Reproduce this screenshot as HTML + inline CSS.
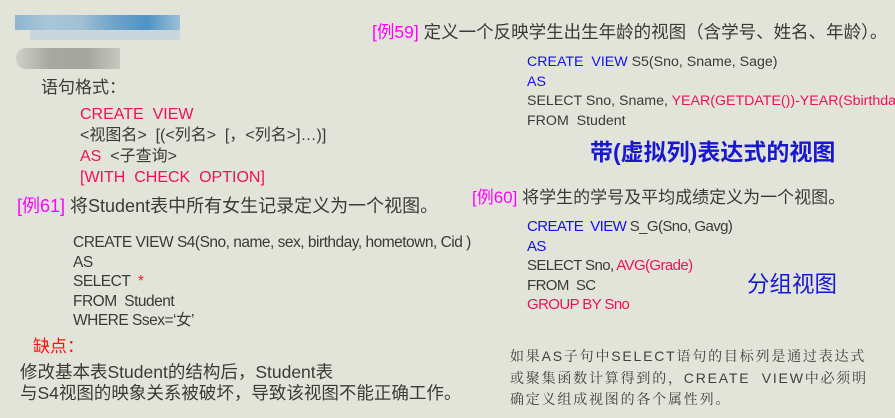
<!DOCTYPE html>
<html><head><meta charset="utf-8"><style>
body{margin:0;width:895px;height:418px;background:#e3e4d9;position:relative;overflow:hidden;font-family:"Liberation Sans","Noto Sans CJK SC",sans-serif;color:#3a3a3a}
.a{position:absolute;white-space:nowrap;line-height:1}
.m{color:#ff00ff}.r{color:#f0105a}.b{color:#1010f0}
.c{font-size:14px;letter-spacing:-0.4px}
</style></head><body>
<div class="a" style="left:15px;top:15px;width:165px;height:15px;background:linear-gradient(90deg,#8fb5d2,#a9c6d8,#9fc0d5,#6fa3c9,#4f93c5,#9cc0d6)"></div>
<div class="a" style="left:30px;top:30px;width:150px;height:10px;background:#c9d7dc"></div>
<div class="a" style="left:16px;top:48px;width:104px;height:21px;border-radius:10px 0 0 10px;background:linear-gradient(90deg,#cfd0c8,#a6a8a0,#a4a69e,#c6c8c0)"></div>

<div class="a" style="left:41px;top:79px;font-size:17px">语句格式：</div>
<div class="a" style="left:80px;top:104px;font-size:16px;line-height:21px">
<span class="r">CREATE&nbsp; VIEW</span><br>&lt;视图名&gt;&nbsp; [(&lt;列名&gt;&nbsp; [，&lt;列名&gt;]…)]<br><span class="r">AS</span>&nbsp; &lt;子查询&gt;<br><span class="r">[WITH&nbsp; CHECK&nbsp; OPTION]</span></div>
<div class="a" style="left:17px;top:197px;font-size:18px"><span class="m">[例61]</span> 将Student表中所有女生记录定义为一个视图。</div>
<div class="a c" style="left:73px;top:233px;line-height:19.6px;font-size:15.5px;letter-spacing:-0.5px">CREATE VIEW S4(Sno, name, sex, birthday, hometown, Cid )<br>AS<br>SELECT&nbsp; <span style="color:#f02020">*</span><br>FROM&nbsp; Student<br>WHERE Ssex=‘女’</div>
<div class="a" style="left:33px;top:338px;font-size:17px;color:#ff1010">缺点：</div>
<div class="a" style="left:20px;top:362px;font-size:17.5px;line-height:21px">修改基本表Student的结构后，Student表<br>与S4视图的映象关系被破坏，导致该视图不能正确工作。</div>

<div class="a" style="left:372px;top:24px;font-size:17.5px"><span class="m">[例59]</span> 定义一个反映学生出生年龄的视图（含学号、姓名、年龄）。</div>
<div class="a" style="left:527px;top:53px;font-size:14.2px;line-height:19.6px"><span class="b">CREATE&nbsp; VIEW</span> S5(Sno, Sname, Sage)<br><span class="b">AS</span><br>SELECT Sno, Sname, <span class="r">YEAR(GETDATE())-YEAR(Sbirthday)</span><br>FROM&nbsp; Student</div>
<div class="a b" style="left:590px;top:141px;font-size:23px;font-weight:bold;color:#1818d0">带(虚拟列)表达式的视图</div>
<div class="a" style="left:472px;top:189px;font-size:17px"><span class="m">[例60]</span> 将学生的学号及平均成绩定义为一个视图。</div>
<div class="a c" style="left:527px;top:217px;line-height:19.6px;font-size:15px;letter-spacing:-0.6px"><span class="b">CREATE&nbsp; VIEW</span> S_G(Sno, Gavg)<br><span class="b">AS</span><br>SELECT Sno, <span class="r">AVG(Grade)</span><br>FROM&nbsp; SC<br><span class="r">GROUP BY Sno</span></div>
<div class="a" style="left:747px;top:274px;font-size:22.5px;color:#1818d0">分组视图</div>
<div class="a" style="left:510px;top:346px;font-size:14px;line-height:21.5px;color:#404040;font-family:'Liberation Sans','Noto Serif CJK SC',serif;letter-spacing:1.8px">如果AS子句中SELECT语句的目标列是通过表达式<br>或聚集函数计算得到的，CREATE&nbsp; VIEW中必须明<br>确定义组成视图的各个属性列。</div>
</body></html>
